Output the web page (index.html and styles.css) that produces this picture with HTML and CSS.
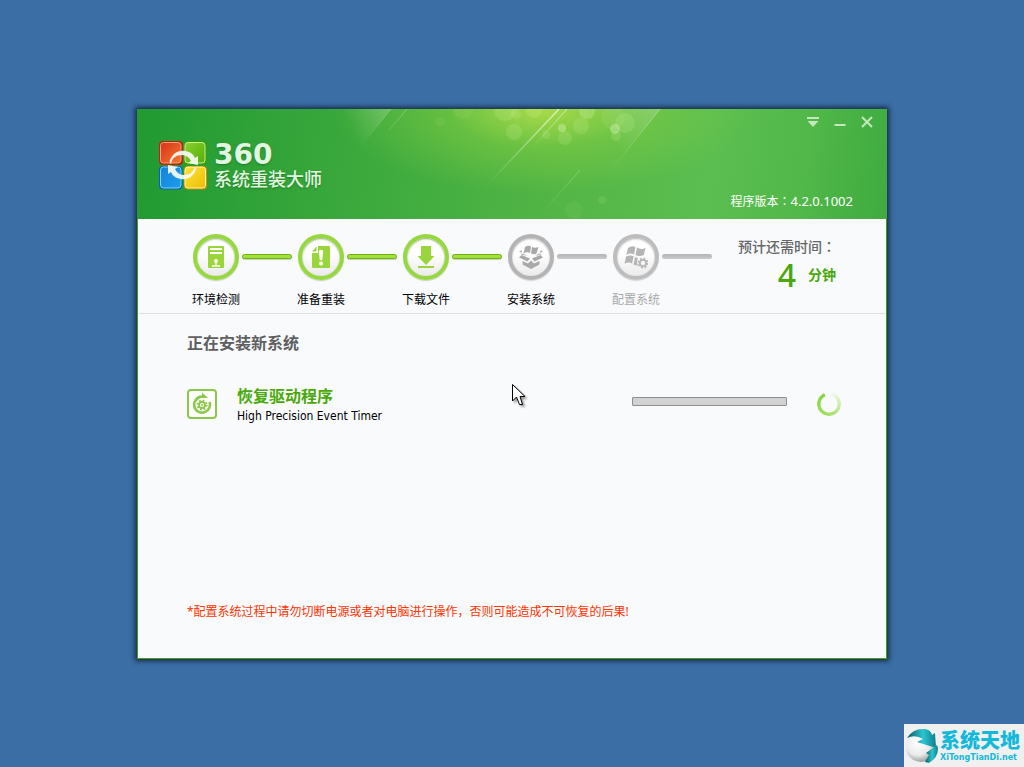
FILE: index.html
```html
<!DOCTYPE html>
<html lang="zh-CN">
<head>
<meta charset="utf-8">
<title>360系统重装大师</title>
<link rel="stylesheet" href="styles.css">
</head>
<body class="desktop">
<main class="window">
  <header class="banner">
    <svg class="banner-art" viewBox="0 0 750 110" preserveAspectRatio="xMidYMin slice" aria-hidden="true">
      <defs>
        <linearGradient id="beam" x1="1" y1="0" x2="0" y2="1">
          <stop offset="0" stop-color="#fff" stop-opacity=".65"/>
          <stop offset="1" stop-color="#fff" stop-opacity="0"/>
        </linearGradient>
        <linearGradient id="wedge" gradientUnits="userSpaceOnUse" x1="523" y1="0" x2="477" y2="32">
          <stop offset="0" stop-color="#fff" stop-opacity=".2"/>
          <stop offset="1" stop-color="#fff" stop-opacity="0"/>
        </linearGradient>
        <linearGradient id="wedge-left" gradientUnits="userSpaceOnUse" x1="254" y1="0" x2="215" y2="20">
          <stop offset="0" stop-color="#fff" stop-opacity=".2"/>
          <stop offset="1" stop-color="#fff" stop-opacity="0"/>
        </linearGradient>
      </defs>
      <path d="M523 0 470 66 430 0z" fill="url(#wedge)"/>
      <path d="M254 0 223 38 170 0z" fill="url(#wedge-left)"/>
      <g stroke="url(#beam)" fill="none">
        <path d="M422 0 353 73" stroke-width="1.4"/>
        <path d="M430 0 396 38"/>
        <path d="M523 0 470 66" stroke-opacity=".5"/>
        <path d="M254 0 223 38M270 0 252 21" stroke-opacity=".4"/>
        <path d="M443 61 400 110" stroke-opacity=".4"/>
      </g>
      <g fill="#e6ffb8" fill-opacity=".14">
        <circle cx="368" cy="1" r="11"/><circle cx="379" cy="5" r="5"/><circle cx="377" cy="23" r="8"/>
        <circle cx="397" cy="1" r="8"/><circle cx="409" cy="26" r="4"/><circle cx="428" cy="29" r="7"/>
        <circle cx="444" cy="17" r="8"/><circle cx="476" cy="8" r="12" fill-opacity=".08"/><circle cx="488" cy="14" r="10"/>
        <circle cx="479" cy="27" r="5"/><circle cx="303" cy="13" r="5" fill-opacity=".07"/>
        <circle cx="326" cy="0" r="10" fill-opacity=".08"/><circle cx="437" cy="101" r="9" fill-opacity=".06"/>
        <circle cx="465" cy="91" r="4" fill-opacity=".1"/>
      </g>
      <g fill="#e8ffcf" fill-opacity=".32">
        <circle cx="425" cy="19" r="4"/><circle cx="478" cy="20" r="5"/><circle cx="450" cy="2" r="8" fill-opacity=".22"/>
      </g>
    </svg>

    <div class="brand">
      <svg class="brand-logo" viewBox="0 0 48 49" aria-hidden="true">
        <defs>
          <linearGradient id="red" x1="0" y1="0" x2="1" y2="1"><stop stop-color="#d8321a"/><stop offset="1" stop-color="#f3792f"/></linearGradient>
          <linearGradient id="lime" x1="0" y1="0" x2="1" y2="1"><stop stop-color="#8ed02f"/><stop offset="1" stop-color="#4fae08"/></linearGradient>
          <linearGradient id="blue" x1="0" y1="0" x2="1" y2="1"><stop stop-color="#1a7fdc"/><stop offset="1" stop-color="#18a0ea"/></linearGradient>
          <linearGradient id="gold" x1="0" y1="0" x2="1" y2="1"><stop stop-color="#fbe33a"/><stop offset="1" stop-color="#eebc05"/></linearGradient>
        </defs>
        <rect x="0" y="0" width="24" height="24" rx="4" fill="#b5260d"/>
        <rect x="1.5" y="1.5" width="20.5" height="20.5" rx="3" fill="url(#red)" stroke="#ff9a80"/>
        <rect x="25" y="0" width="22.5" height="24" rx="4" fill="#3e9c05"/>
        <rect x="26" y="1.5" width="20" height="20.5" rx="3" fill="url(#lime)" stroke="#c4f08b"/>
        <rect x="0" y="25" width="23.5" height="23.5" rx="4" fill="#0b5fae"/>
        <rect x="1.5" y="26" width="20.5" height="21" rx="3" fill="url(#blue)" stroke="#7fd0ff"/>
        <rect x="25" y="25" width="23" height="23.5" rx="4" fill="#c98f00"/>
        <rect x="26" y="26" width="20.5" height="21" rx="3" fill="url(#gold)" stroke="#fff3a0"/>
        <path d="M11 19C14 12 20 9 26 10C32 11 35 14 36 17L39 15V24L29 22L32 20C30 16 27 14 23 14C17 14 13 17 12 23C10.5 22 10.5 20 11 19Z" fill="#f7fbf5" fill-opacity=".92"/>
        <path d="M37 29C34 36 28 39 22 38C16 37 13 34 12 31L9 33V24L19 26L16 28C18 32 21 34 25 34C31 34 34 31 36 26C37.5 26 37.5 28 37 29Z" fill="#f7fbf5" fill-opacity=".92"/>
      </svg>
      <h1 class="brand-name"><span class="brand-number">360</span><span class="brand-title">系统重装大师</span></h1>
    </div>

    <div class="banner-side">
      <div class="controls">
        <button class="control" type="button" aria-label="菜单"><svg viewBox="0 0 12 12"><path d="M0 1h12v2H0zM0.5 5h11L6 11z" fill="currentColor"/></svg></button>
        <button class="control" type="button" aria-label="最小化"><svg viewBox="0 0 12 12"><path d="M0.5 8h11v2H0.5z" fill="currentColor"/></svg></button>
        <button class="control" type="button" aria-label="关闭"><svg viewBox="0 0 12 12"><path d="M1 1 11 11M11 1 1 11" stroke="currentColor" stroke-width="2"/></svg></button>
      </div>
      <p class="version">程序版本<span class="colon" lang="zh-TW">：</span><span class="version-number">4.2.0.1002</span></p>
    </div>
  </header>

  <div class="content">
    <section class="progress-bar">
      <ol class="steps">
        <li class="step done">
          <span class="ring"><svg class="step-icon" viewBox="0 0 24 24"><rect x="4" y="1" width="16" height="22" rx="1" fill="#9ad63b"/><path d="M6 4h12M6 8h12" stroke="#fff" stroke-width="2"/><circle cx="12" cy="16" r="2" fill="#fff"/><path d="M12 17v3M8 21h8" stroke="#fff" stroke-width="1.3"/></svg></span>
          <span class="link"></span>
          <span class="step-label">环境检测</span>
        </li>
        <li class="step done">
          <span class="ring"><svg class="step-icon" viewBox="0 0 24 24"><path d="M9 1H20q1 0 1 1V22q0 1-1 1H4q-1 0-1-1V8H9z" fill="#9ad63b"/><path d="M7.5 1.5V6.5H3z" fill="#9ad63b"/><path d="M9.9 6.5q0-1.8 2.1-1.8t2.1 1.8L13.2 15.2h-2.4z" fill="#fff"/><circle cx="12" cy="18.5" r="2" fill="#fff"/></svg></span>
          <span class="link"></span>
          <span class="step-label">准备重装</span>
        </li>
        <li class="step done">
          <span class="ring"><svg class="step-icon" viewBox="0 0 24 24"><path d="M7 1H17V11H20.5L12 20 3.5 11H7zM4 21h16v2H4z" fill="#9ad63b"/></svg></span>
          <span class="link"></span>
          <span class="step-label">下载文件</span>
        </li>
        <li class="step">
          <span class="ring"><svg class="step-icon" viewBox="0 0 24 24"><g fill="#a9a9a9"><path d="M6 2Q9 0 12 1.5L11 8Q8 6.5 4.5 8.5ZM13 2Q16 3.5 19.5 2L17.5 8.5Q15 10 12 8.3Z"/><path d="M2.5 10 11 13.5 8.5 16.5 0 12.5ZM21.5 10 13 13.5 15.5 16.5 24 12.5ZM3.5 16 9 18.5 12 15.5 15 18.5 20.5 16V19.5L12 24 3.5 19.5Z"/><path d="M0 6 3 5.5 2.5 8ZM24 6 21 5.5 21.5 8ZM1 9 4 8.5 8 11ZM23 9 20 8.5 16 11Z"/></g></svg></span>
          <span class="link"></span>
          <span class="step-label">安装系统</span>
        </li>
        <li class="step pending">
          <span class="ring"><svg class="step-icon" viewBox="0 0 24 24"><g fill="#b5b5b5"><path d="M4 3Q8 0 11.5 2L10 9.5Q6.5 7.5 2.3 10ZM13 2.5Q17 5 21.5 3L19.8 10Q15.5 12 11.5 10ZM2 11.5Q6 9.5 9.7 11.2L8 18.5Q4.5 16.5 0.5 18.8ZM11 12Q12.5 13 14 13L12.8 17 14 20.5Q11 20.5 9.5 19.5Z"/></g><g fill="none" stroke="#b5b5b5"><circle cx="19" cy="18" r="3.2" stroke-width="1.8"/><circle cx="19" cy="18" r="4.7" stroke-width="1.6" stroke-dasharray="1.85 1.84"/></g></svg></span>
          <span class="link"></span>
          <span class="step-label">配置系统</span>
        </li>
      </ol>
      <div class="estimate">
        <p class="estimate-label">预计还需时间<span class="colon" lang="zh-TW">：</span></p>
        <p class="estimate-value"><span class="minutes">4</span><span class="unit">分钟</span></p>
      </div>
    </section>

    <section class="task-area">
      <h2 class="heading">正在安装新系统</h2>
      <div class="task">
        <svg class="task-icon" viewBox="0 0 30 30" aria-hidden="true">
          <rect x="1" y="1" width="28" height="28" rx="3" fill="#fff" stroke="#8cc94a" stroke-width="2"/>
          <path d="M10.5 9A8 8 0 1 0 22.6 13" fill="none" stroke="#8cc94a" stroke-width="2.6"/>
          <path d="M8.5 10Q11 5.5 15 6.5V3.5L21 9H14Q10.5 10 9.5 13Z" fill="#8cc94a"/>
          <circle cx="15" cy="16" r="3" fill="none" stroke="#8cc94a" stroke-width="1.8"/>
          <circle cx="15" cy="16" r="4.6" fill="none" stroke="#8cc94a" stroke-width="1.8" stroke-dasharray="1.81 1.8"/>
          <circle cx="15" cy="16" r="1" fill="#8cc94a"/>
        </svg>
        <div class="task-text">
          <label class="task-name" for="task-progress">恢复驱动程序</label>
          <span class="task-detail">High Precision Event Timer</span>
        </div>
        <progress class="meter" id="task-progress" value="0" max="100"></progress>
        <span class="spinner"></span>
      </div>
    </section>
    <p class="warning">*配置系统过程中请勿切断电源或者对电脑进行操作，否则可能造成不可恢复的后果!</p>
  </div>

  <svg class="cursor" viewBox="0 0 18 24" aria-hidden="true"><path d="M.5.5V17L4.5 13 7.5 20.5H10.5L8 12.5H13Z" fill="#fff" stroke="#000"/></svg>
</main>

<aside class="watermark">
  <svg class="watermark-logo" viewBox="0 0 34 36" aria-hidden="true">
    <defs>
      <radialGradient id="ball" cx=".4" cy=".35" r=".7"><stop stop-color="#fff"/><stop offset=".6" stop-color="#ebebeb"/><stop offset="1" stop-color="#8d9696"/></radialGradient>
      <linearGradient id="swoosh" x1="0" x2="1"><stop stop-color="#0b5a60"/><stop offset=".55" stop-color="#2cc5d2"/><stop offset="1" stop-color="#0d7f8b"/></linearGradient>
    </defs>
    <circle cx="16" cy="19" r="15" fill="url(#ball)"/>
    <path d="M2 10Q8 0 20 1Q26 2 27 7L30 5L31 20L12 14L18 11Q10 6 2 10Z" fill="url(#swoosh)"/>
    <path d="M33 20Q33 30 24 35L20 34L24 27L21 25L32 17Z" fill="url(#swoosh)"/>
  </svg>
  <p class="watermark-text"><strong class="site-name">系统天地</strong><span class="site-url">XiTongTianDi.net</span></p>
</aside>
</body>
</html>
```
FILE: styles.css
```css
* { box-sizing: border-box; }

h1, h2, p, ol { margin: 0; padding: 0; }

.desktop {
  margin: 0;
  min-height: 100vh;
  display: flex;
  align-items: center;
  justify-content: center;
  background: #3b6ea5;
  color: #000;
  font-family: "Noto Sans", "Noto Sans CJK SC", sans-serif;
  font-size: 12px;
  line-height: 16px;
}

.window {
  position: relative;
  display: flex;
  flex-direction: column;
  width: 750px;
  max-width: 100%;
  min-height: 550px;
  background: #f8fafc;
  box-shadow: 0 0 5px 2px rgba(8, 20, 40, .75);
}

.banner {
  position: relative;
  display: flex;
  justify-content: space-between;
  min-height: 110px;
  color: #fff;
  background:
    radial-gradient(ellipse 210px 85px at 54% 0, rgba(185, 226, 75, .85), rgba(150, 215, 65, .4) 45%, rgba(120, 205, 60, 0)),
    linear-gradient(97deg, #209a32 0, #35a53a 22%, #42ad40 38%, #52b545 56%, #5bbe50 76%, #52b84a 88%, #3fab3f 100%);
}

.banner-art {
  position: absolute;
  inset: 0;
  width: 100%;
  height: 100%;
}

.brand {
  position: relative;
  display: flex;
  align-items: flex-start;
  gap: 7px;
  padding: 32px 0 0 22px;
}

.brand-logo { width: 48px; height: 49px; }

.brand-name {
  display: flex;
  flex-direction: column;
  color: #e2f5e0;
  text-shadow: 0 1px 2px rgba(0, 70, 0, .4);
}

.brand-number {
  font: bold 28px/28px "DejaVu Sans", sans-serif;
}

.brand-title {
  font: 500 18px/18px "Noto Sans CJK SC", sans-serif;
}

.banner-side {
  position: relative;
  display: flex;
  flex-direction: column;
  align-items: flex-end;
  justify-content: space-between;
  padding: 0 7px 9px 0;
}

.controls { display: flex; }

.control {
  display: flex;
  align-items: center;
  justify-content: center;
  width: 27px;
  height: 27px;
  padding: 0;
  border: 0;
  background: none;
  color: #c3e8be;
}

.control svg { width: 12px; height: 12px; }

.version { padding-right: 27px; }

.version-number { font-size: 13px; }

.colon { font-family: "Noto Sans CJK TC", sans-serif; }

.content {
  flex: 1;
  display: flex;
  flex-direction: column;
  border: 1px solid #48a00c;
  border-top: 0;
}

.progress-bar {
  display: flex;
  gap: 21px;
  min-height: 95px;
  padding: 15px 0 0 54px;
  border-bottom: 1px solid #dcdfe2;
}

.steps {
  display: flex;
  list-style: none;
}

.step {
  display: grid;
  grid-template-columns: 48px 50px;
  column-gap: 2px;
  row-gap: 12px;
  align-content: start;
  align-items: center;
  justify-items: center;
  padding-right: 5px;
}

.ring {
  display: flex;
  align-items: center;
  justify-content: center;
  width: 46px;
  height: 46px;
  border: 4px solid #b4b4b4;
  border-radius: 50%;
  background: linear-gradient(#fff 40%, #ebebeb);
  box-shadow: inset 0 1px 2px rgba(0, 0, 0, .3), 0 1px 1px rgba(0, 0, 0, .15);
}

.pending .ring { border-color: #bdbdbd; }

.done .ring {
  border-color: #97d740;
  box-shadow: inset 0 1px 2px rgba(70, 120, 0, .6), 0 1px 1px rgba(70, 120, 0, .3);
}

.step-icon { width: 24px; height: 24px; }

.link {
  width: 50px;
  height: 5px;
  border-radius: 3px;
  background: linear-gradient(#b5b5b5, #c9c9c9);
}

.done .link {
  border: 1px solid #6fb312;
  background: #a2e03c;
  box-shadow: 0 1px 1px rgba(80, 120, 0, .3);
}

.step-label { white-space: nowrap; }

.pending .step-label { color: #a9a9a9; }

.estimate {
  display: flex;
  flex-direction: column;
  padding-top: 2px;
  color: #666;
}

.estimate-label {
  font-size: 14px;
  font-weight: 500;
  line-height: 20px;
}

.estimate-value {
  display: flex;
  align-items: center;
  justify-content: flex-end;
  gap: 12px;
  color: #4aa80a;
  line-height: 36px;
}

.minutes {
  font-size: 32px;
  font-weight: 500;
}

.unit {
  font-size: 14px;
  font-weight: 600;
}

.task-area {
  flex: 1;
  padding: 17px 45px 0 49px;
}

.heading {
  color: #5f5f5f;
  font-size: 16px;
  line-height: 24px;
}

.task {
  display: flex;
  align-items: center;
  padding-top: 29px;
}

.task-icon { width: 30px; height: 30px; }

.task-text {
  flex: 1;
  display: flex;
  flex-direction: column;
  padding-left: 20px;
}

.task-name {
  color: #4aa80a;
  font-size: 16px;
  font-weight: 700;
  line-height: 24px;
}

.task-detail {
  font-family: "DejaVu Sans Condensed", "Noto Sans", sans-serif;
  line-height: 16px;
}

.meter {
  appearance: none;
  width: 155px;
  height: 9px;
  margin: 0 30px 5px 0;
  border: 1px solid #8f8f8f;
  border-radius: 1px;
  background: #d2d2d2;
}

.meter::-webkit-progress-bar { background: #d2d2d2; }

.meter::-webkit-progress-value { background: #97d740; }

.spinner {
  width: 24px;
  height: 24px;
  border-radius: 50%;
  background: conic-gradient(from 335deg, transparent 8%, #d9f2c0 25%, #a6e06c 55%, #84d63c 100%);
  mask: radial-gradient(circle, transparent 8px, #000 9px);
}

.warning {
  padding: 0 49px 38px;
  color: #f30;
}

.cursor {
  position: absolute;
  left: 375px;
  top: 275px;
  width: 18px;
  height: 24px;
  filter: drop-shadow(2px 2px 1px rgba(0, 0, 0, .4));
}

.watermark {
  position: absolute;
  right: 0;
  bottom: 0;
  display: flex;
  align-items: center;
  gap: 1px;
  width: 120px;
  height: 43px;
  padding-left: 1px;
  background: #f0f0f0;
  color: #12b9da;
}

.watermark-logo { width: 34px; height: 36px; }

.watermark-text {
  display: flex;
  flex-direction: column;
}

.site-name {
  font: 900 20px/24px "Noto Sans CJK SC", sans-serif;
}

.site-url {
  font: bold 8px/12px "DejaVu Sans", sans-serif;
}
```
